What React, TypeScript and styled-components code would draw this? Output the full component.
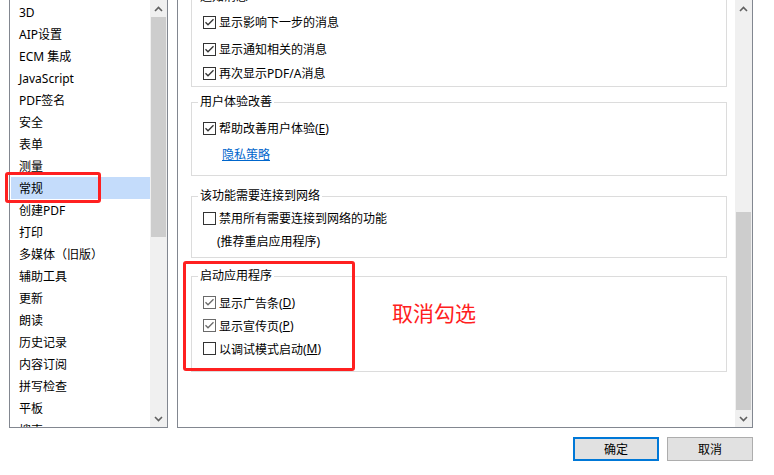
import React from "react";
import styled, { createGlobalStyle } from "styled-components";

const Global = createGlobalStyle`
  html, body { margin: 0; padding: 0; background: #ffffff; }
  body {
    font-family: "Noto Sans", "Noto Sans CJK SC", sans-serif;
    font-size: 12px;
    color: #000;
  }
`;

const Page = styled.div`
  position: relative;
  width: 774px;
  height: 475px;
  overflow: hidden;
  background: #fff;
`;

const Main = styled.div`
  display: flex;
  height: 428px;
`;

const ListBox = styled.div`
  margin-left: 9px;
  width: 159px;
  box-sizing: border-box;
  border: 1px solid #828790;
  border-top: none;
  display: flex;
  overflow: hidden;
`;

const Items = styled.div`
  width: 140px;
  padding: 1px 0 0 1px;
  box-sizing: border-box;
  overflow: hidden;
`;

const Item = styled.div<{ $selected?: boolean }>`
  height: 22px;
  box-sizing: border-box;
  padding: 2px 0 0 8px;
  line-height: 20px;
  white-space: nowrap;
  background: ${(p) => (p.$selected ? "#c4dcfb" : "transparent")};
`;

const ScrollBar = styled.div`
  width: 17px;
  flex: none;
  display: flex;
  flex-direction: column;
  background: #f0f0f0;
`;

const Arrow = styled.div`
  height: 17px;
  flex: none;
  display: flex;
  align-items: center;
  justify-content: center;
`;

const Track = styled.div`
  flex: 1;
  display: flex;
  flex-direction: column;
`;

const Thumb = styled.div<{ $top: number; $h: number }>`
  margin: ${(p) => p.$top}px 1px 0 1px;
  height: ${(p) => p.$h}px;
  background: #cdcdcd;
`;

const Panel = styled.div`
  margin-left: 9px;
  width: 576px;
  box-sizing: border-box;
  border: 1px solid #828790;
  border-top: none;
  display: flex;
  overflow: hidden;
`;

const Viewport = styled.div`
  flex: 1;
  overflow: hidden;
`;

const Content = styled.div`
  margin-top: -11px;
  display: flex;
  flex-direction: column;
`;

const Group = styled.fieldset<{ $mt: number; $pt: number; $pb: number }>`
  margin: ${(p) => p.$mt}px 8px 0 13px;
  padding: ${(p) => p.$pt}px 0 ${(p) => p.$pb}px 11px;
  border: 1px solid #dcdcdc;
  min-width: 0;
`;

const Legend = styled.legend`
  margin-left: -5px;
  padding: 0 2px;
  line-height: 16px;
  height: 16px;
`;

const Row = styled.div<{ $h?: number; $mt?: number; $indent?: number }>`
  display: flex;
  align-items: center;
  height: ${(p) => p.$h ?? 24}px;
  margin-top: ${(p) => p.$mt ?? 0}px;
  padding-left: ${(p) => p.$indent ?? 0}px;
  white-space: nowrap;
`;

const Box = styled.span<{ $tone?: string }>`
  width: 13px;
  height: 13px;
  box-sizing: border-box;
  border: 1px solid ${(p) => p.$tone ?? "#333"};
  background: #fff;
  margin-right: 3px;
  display: flex;
  align-items: center;
  justify-content: center;
  flex: none;
`;

const Link = styled.span`
  color: #0066cc;
  text-decoration: underline;
`;

const Footer = styled.div`
  display: flex;
  justify-content: flex-end;
  gap: 8px;
  padding: 9px 21px 0 0;
`;

const Button = styled.div<{ $primary?: boolean }>`
  width: 86px;
  height: 24px;
  box-sizing: border-box;
  background: #e1e1e1;
  border: ${(p) => (p.$primary ? "2px solid #0078d7" : "1px solid #adadad")};
  display: flex;
  align-items: center;
  justify-content: center;
`;

const Mark = styled.div<{ $x: number; $y: number; $w: number; $h: number }>`
  position: absolute;
  left: ${(p) => p.$x}px;
  top: ${(p) => p.$y}px;
  width: ${(p) => p.$w}px;
  height: ${(p) => p.$h}px;
  box-sizing: border-box;
  border: 3px solid #ff2020;
  border-radius: 3px;
  pointer-events: none;
`;

const Note = styled.div`
  position: absolute;
  left: 392px;
  top: 298px;
  font-family: "Noto Sans CJK SC", sans-serif;
  font-size: 21px;
  line-height: 28px;
  color: #ff2020;
`;

const Up = () => (
  <svg width="9" height="6" viewBox="0 0 9 6">
    <polyline points="1,5 4.5,1.5 8,5" fill="none" stroke="#606060" strokeWidth="1.6" />
  </svg>
);
const Down = () => (
  <svg width="9" height="6" viewBox="0 0 9 6">
    <polyline points="1,1 4.5,4.5 8,1" fill="none" stroke="#606060" strokeWidth="1.6" />
  </svg>
);

const Check: React.FC<{ checked?: boolean; tone?: string }> = ({ checked, tone }) => (
  <Box $tone={tone}>
    {checked && (
      <svg width="11" height="11" viewBox="0 0 11 11">
        <polyline points="1.5,5.2 4,7.8 9.5,2.2" fill="none" stroke={tone ?? "#333"} strokeWidth="1.3" />
      </svg>
    )}
  </Box>
);

const Bar: React.FC<{ top: number; h: number }> = ({ top, h }) => (
  <ScrollBar>
    <Arrow><Up /></Arrow>
    <Track><Thumb $top={top} $h={h} /></Track>
    <Arrow><Down /></Arrow>
  </ScrollBar>
);

const items = [
  "3D", "AIP设置", "ECM 集成", "JavaScript", "PDF签名", "安全", "表单", "测量", "常规",
  "创建PDF", "打印", "多媒体（旧版）", "辅助工具", "更新", "朗读", "历史记录", "内容订阅",
  "拼写检查", "平板", "搜索",
];

export default function App() {
  return (
    <Page>
      <Global />
      <Main>
        <ListBox>
          <Items>
            {items.map((t) => (
              <Item key={t} $selected={t === "常规"}>{t}</Item>
            ))}
          </Items>
          <Bar top={0} h={220} />
        </ListBox>
        <Panel>
          <Viewport>
            <Content>
              <Group $mt={0} $pt={5} $pb={1}>
                <Legend>通知消息</Legend>
                <Row><Check checked />显示影响下一步的消息</Row>
                <Row $mt={3}><Check checked />显示通知相关的消息</Row>
                <Row><Check checked />再次显示PDF/A消息</Row>
              </Group>
              <Group $mt={7} $pt={6} $pb={9}>
                <Legend>用户体验改善</Legend>
                <Row><Check checked />帮助改善用户体验(<u>E</u>)</Row>
                <Row $mt={2} $indent={19}><Link>隐私策略</Link></Row>
              </Group>
              <Group $mt={12} $pt={2} $pb={4}>
                <Legend>该功能需要连接到网络</Legend>
                <Row><Check />禁用所有需要连接到网络的功能</Row>
                <Row $mt={-1} $indent={14}>(推荐重启应用程序)</Row>
              </Group>
              <Group $mt={10} $pt={7} $pb={11}>
                <Legend>启动应用程序</Legend>
                <Row $h={23}><Check checked tone="#6a6a6a" />显示广告条(<u>D</u>)</Row>
                <Row $h={23}><Check checked tone="#6a6a6a" />显示宣传页(<u>P</u>)</Row>
                <Row $h={23}><Check />以调试模式启动(<u>M</u>)</Row>
              </Group>
            </Content>
          </Viewport>
          <Bar top={195} h={198} />
        </Panel>
      </Main>
      <Footer>
        <Button $primary>确定</Button>
        <Button>取消</Button>
      </Footer>
      <Mark $x={5} $y={172} $w={96} $h={31} />
      <Mark $x={183} $y={261} $w={172} $h={110} />
      <Note>取消勾选</Note>
    </Page>
  );
}
